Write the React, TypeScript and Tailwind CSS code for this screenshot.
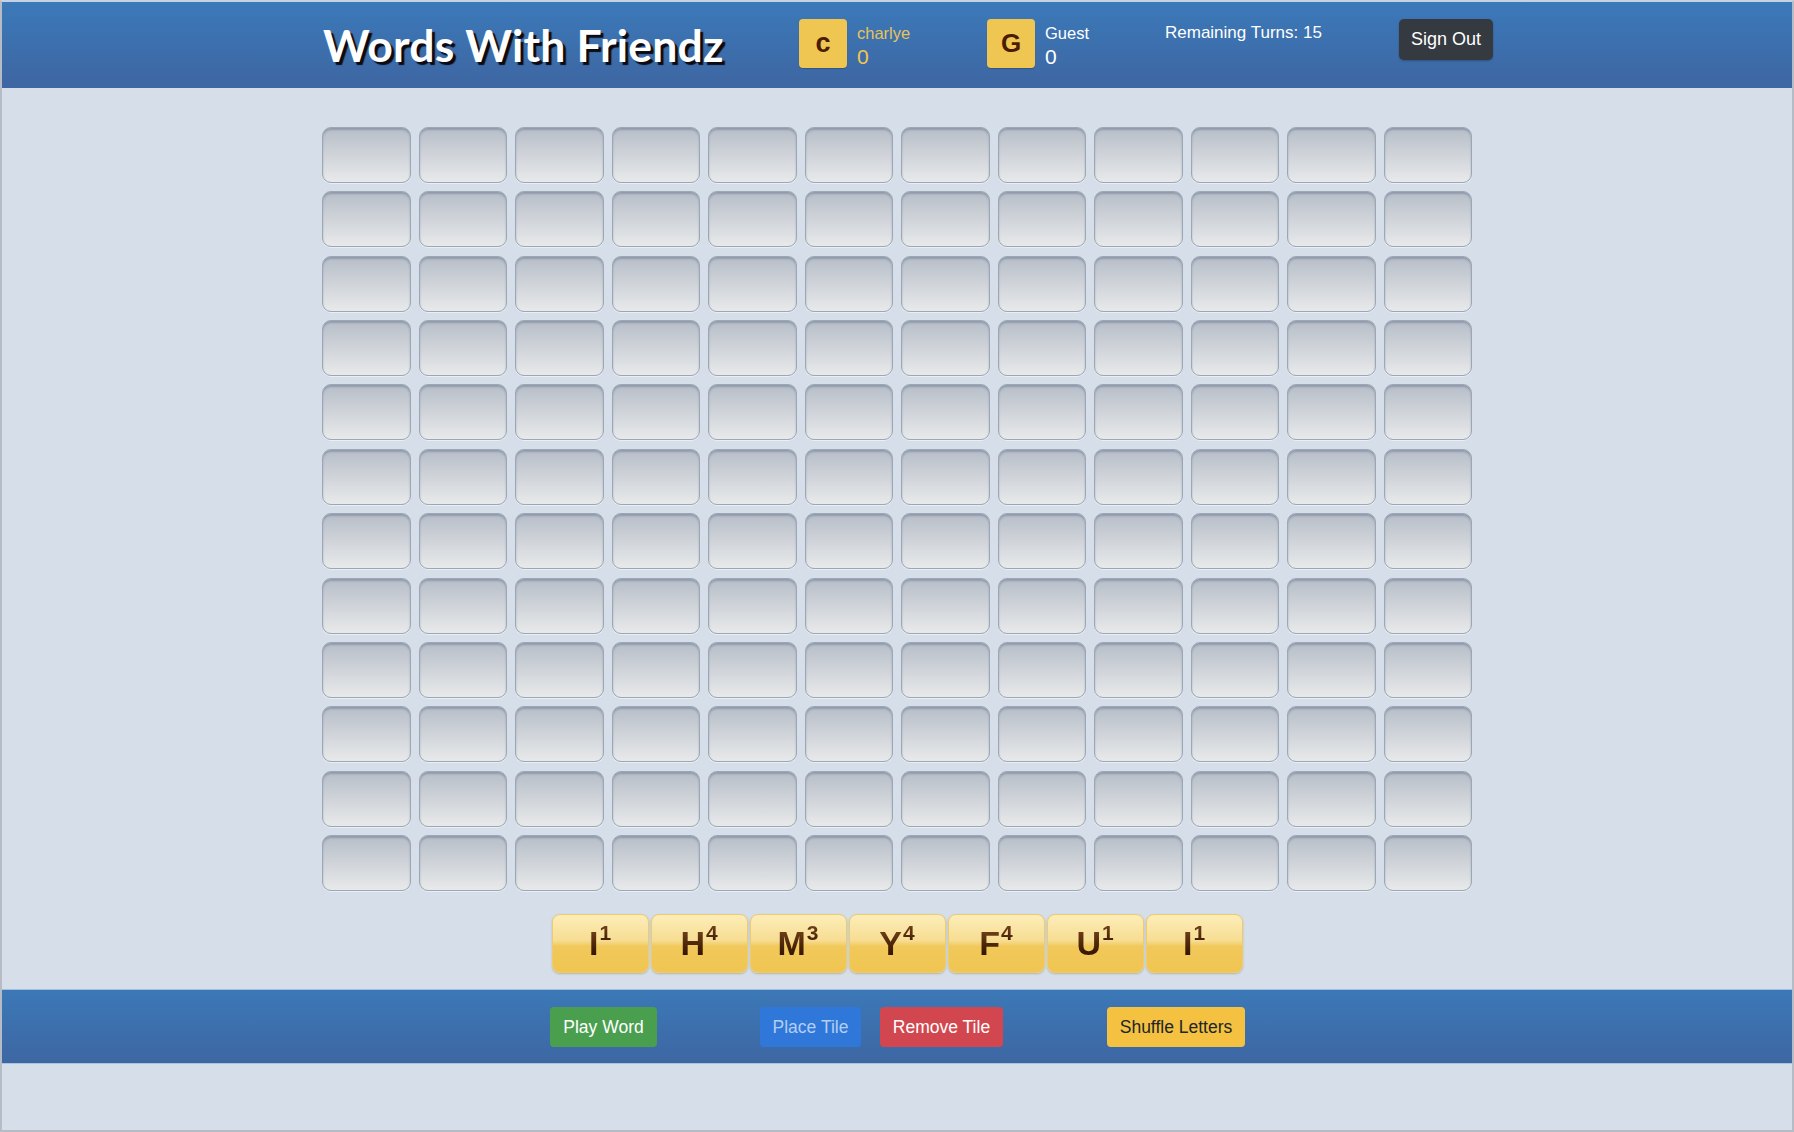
import React from "react";

const tiles: [string, number][] = [
  ["I", 1],
  ["H", 4],
  ["M", 3],
  ["Y", 4],
  ["F", 4],
  ["U", 1],
  ["I", 1],
];

function Cell() {
  return (
    <div className="h-[56px] rounded-[9px] border border-[#9ca7b5] bg-[linear-gradient(to_bottom,#b7bec8_0%,#d2d6db_55%,#e8e9ea_100%)] shadow-[inset_0_2px_2px_rgba(70,90,120,0.35),0_1px_0_rgba(255,255,255,0.5)]" />
  );
}

function Tile({ letter, score }: { letter: string; score: number }) {
  return (
    <div className="w-[97px] h-[59px] rounded-[8px] border border-[#ebcd70] bg-[linear-gradient(to_bottom,#fcedb9_0%,#f7dd92_45%,#f1c85a_55%,#f0c552_100%)] shadow-[0_1px_2px_rgba(120,100,40,0.35)] flex items-center justify-center">
      <div className="flex items-start font-['Liberation_Sans_Narrow','Liberation_Sans',Arial,sans-serif] font-bold">
        <span className="text-[34px] leading-[32px] bg-gradient-to-b from-[#7a461c] to-[#2b0f00] bg-clip-text text-transparent">
          {letter}
        </span>
        <span className="text-[21px] leading-[20px] -mt-[4px] ml-[1px] bg-gradient-to-b from-[#7a461c] to-[#3a1a04] bg-clip-text text-transparent">
          {score}
        </span>
      </div>
    </div>
  );
}

function Player({
  initial,
  name,
  nameColor,
  scoreColor,
  width,
  letterSize,
}: {
  initial: string;
  name: string;
  nameColor: string;
  scoreColor: string;
  width: string;
  letterSize: string;
}) {
  return (
    <div className={`flex items-start gap-[10px] ${width}`}>
      <div className="w-[48px] h-[49px] rounded-[4px] bg-[#f0c652] shadow-[0_1px_1px_rgba(0,0,0,0.2)] flex items-center justify-center">
        <span className={`${letterSize} font-bold text-[#4a1c02] font-['Liberation_Sans',Arial,sans-serif]`}>
          {initial}
        </span>
      </div>
      <div className="flex flex-col pt-[4px] font-['Liberation_Sans',Arial,sans-serif]">
        <span className={`text-[16.5px] leading-[20px] ${nameColor}`}>{name}</span>
        <span className={`text-[21px] leading-[27px] ${scoreColor}`}>0</span>
      </div>
    </div>
  );
}

export default function App() {
  return (
    <div className="w-full h-[1132px] border-2 border-[#b5bcc6] border-t-[#c6d2e2] bg-[#d6dee9] flex flex-col font-['Liberation_Sans',Arial,sans-serif] overflow-hidden">
      <header className="h-[86px] shrink-0 bg-[linear-gradient(to_bottom,#3b79b9,#3e66a2)] flex items-start pt-[17px] pl-[321px]">
        <h1 className="w-[476px] text-[44.5px] leading-[52px] font-bold text-white font-['Lato','Noto_Sans',sans-serif] [text-shadow:3px_3px_1px_#0b0b14] tracking-[0.2px]">
          Words With Friendz
        </h1>
        <Player
          initial="c"
          name="charlye"
          nameColor="text-[#e6c35c]"
          scoreColor="text-[#f1c74f]"
          width="w-[188px]"
          letterSize="text-[27px]"
        />
        <Player
          initial="G"
          name="Guest"
          nameColor="text-white"
          scoreColor="text-white"
          width="w-[178px]"
          letterSize="text-[26px]"
        />
        <div className="w-[234px] pt-[4px] text-[17px] leading-[20px] text-white">
          Remaining Turns: 15
        </div>
        <button className="w-[94px] h-[41px] rounded-[5px] bg-[#343a40] text-white text-[18px] shadow-[0_1px_2px_rgba(0,0,0,0.25)]">
          Sign Out
        </button>
      </header>

      <main className="flex flex-col items-center pt-[39px]">
        <div className="grid grid-cols-[repeat(12,88.5px)] gap-x-[8px] gap-y-[8.36px]">
          {Array.from({ length: 144 }).map((_, i) => (
            <Cell key={i} />
          ))}
        </div>
        <div className="flex gap-[2px] mt-[23px]">
          {tiles.map(([l, s], i) => (
            <Tile key={i} letter={l} score={s} />
          ))}
        </div>
      </main>

      <footer className="mt-[16px] h-[75px] shrink-0 border-t border-[#9fbfe3] border-b border-b-[#a9c3e0] bg-[linear-gradient(to_bottom,#3c78b7,#3d67a3)] flex items-start pt-[17px] pl-[548px]">
        <button className="w-[107px] h-[40px] rounded-[4px] bg-[#4a9f4f] text-white text-[17.5px]">
          Play Word
        </button>
        <button className="ml-[103px] w-[101px] h-[40px] rounded-[4px] bg-[#2f78d9] text-[#b3cdf3] text-[17.5px]">
          Place Tile
        </button>
        <button className="ml-[19px] w-[123px] h-[40px] rounded-[4px] bg-[#d2474f] text-white text-[17.5px]">
          Remove Tile
        </button>
        <button className="ml-[104px] w-[138px] h-[40px] rounded-[4px] bg-[#f4c240] text-[#212529] text-[17.5px]">
          Shuffle Letters
        </button>
      </footer>
    </div>
  );
}
